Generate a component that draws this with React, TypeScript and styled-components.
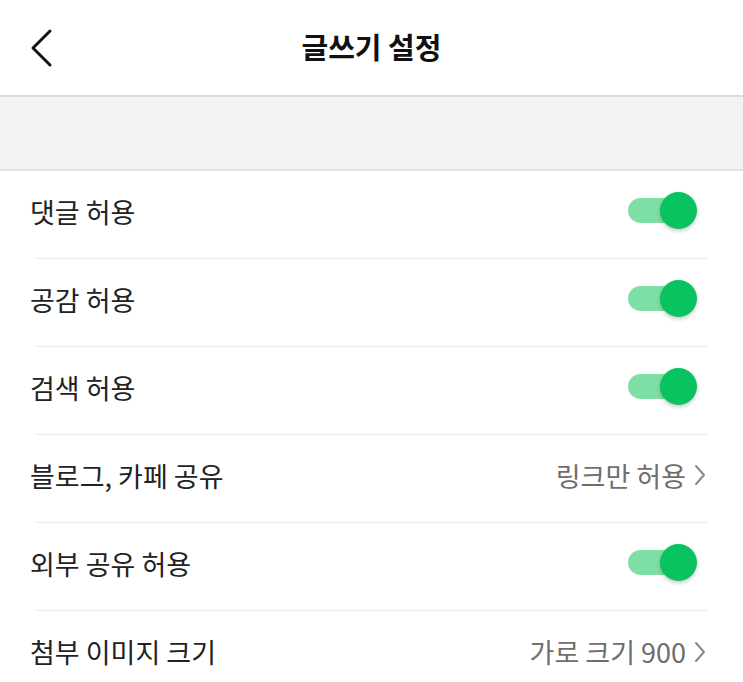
import styled, { createGlobalStyle } from "styled-components";

const GlobalStyle = createGlobalStyle`
  html, body {
    margin: 0;
    padding: 0;
    background: #fff;
  }
  body {
    font-family: "Noto Sans CJK KR", "Noto Sans", sans-serif;
    color: #222;
  }
`;

const Page = styled.div`
  width: 743px;
  height: 682px;
  overflow: hidden;
  background: #fff;
`;

const Header = styled.header`
  height: 95px;
  display: grid;
  grid-template-columns: 80px 1fr 80px;
  align-items: center;
  border-bottom: 2px solid #dcdcdc;
`;

const BackButton = styled.button`
  border: 0;
  background: none;
  padding: 0 0 0 28px;
  display: flex;
  align-items: center;
  height: 100%;
`;

const Title = styled.h1`
  margin: 0 0 3px;
  text-align: center;
  font-size: 29px;
  font-weight: 700;
  color: #111;
`;

const Spacer = styled.div`
  height: 72px;
  background: #f3f3f3;
  border-bottom: 2px solid #e2e2e2;
`;

const List = styled.ul`
  list-style: none;
  margin: 0;
  padding: 0;
`;

const Row = styled.li<{ $last?: boolean }>`
  height: 88px;
  margin: 0 35px;
  padding-bottom: 7px;
  display: flex;
  align-items: center;
  justify-content: space-between;
  border-bottom: ${(p) => (p.$last ? "none" : "1px solid #ececec")};
  box-sizing: border-box;
`;

const Label = styled.span`
  margin-left: -5px;
  font-size: 27px;
  font-weight: 400;
  color: #222;
`;

const Value = styled.span`
  display: flex;
  align-items: center;
  gap: 8px;
  font-size: 27px;
  color: #6e6e6e;
  margin-right: 2px;
`;

const Toggle = styled.span`
  position: relative;
  width: 56px;
  height: 25px;
  margin-right: 24px;
  margin-top: -2px;
  border-radius: 13px;
  background: #7edfa4;
`;

const Knob = styled.span`
  position: absolute;
  right: -13px;
  top: -6px;
  width: 37px;
  height: 37px;
  border-radius: 50%;
  background: #07c25e;
  box-shadow: 0 2px 4px rgba(0, 0, 0, 0.22);
`;

type Item = { label: string; value?: string };

const items: Item[] = [
  { label: "댓글 허용" },
  { label: "공감 허용" },
  { label: "검색 허용" },
  { label: "블로그, 카페 공유", value: "링크만 허용" },
  { label: "외부 공유 허용" },
  { label: "첨부 이미지 크기", value: "가로 크기 900" },
];

export default function App() {
  return (
    <Page>
      <GlobalStyle />
      <Header>
        <BackButton aria-label="back">
          <svg width="26" height="40" viewBox="0 0 26 40">
            <path d="M22 3 L5 20 L22 37" fill="none" stroke="#111" strokeWidth="3" strokeLinecap="round" strokeLinejoin="round" />
          </svg>
        </BackButton>
        <Title>글쓰기 설정</Title>
        <div />
      </Header>
      <Spacer />
      <List>
        {items.map((it, i) => (
          <Row key={it.label} $last={i === items.length - 1}>
            <Label>{it.label}</Label>
            {it.value ? (
              <Value>
                {it.value}
                <svg width="12" height="22" viewBox="0 0 12 22">
                  <path d="M2 2 L10 11 L2 20" fill="none" stroke="#888" strokeWidth="2" strokeLinecap="round" strokeLinejoin="round" />
                </svg>
              </Value>
            ) : (
              <Toggle>
                <Knob />
              </Toggle>
            )}
          </Row>
        ))}
      </List>
    </Page>
  );
}
